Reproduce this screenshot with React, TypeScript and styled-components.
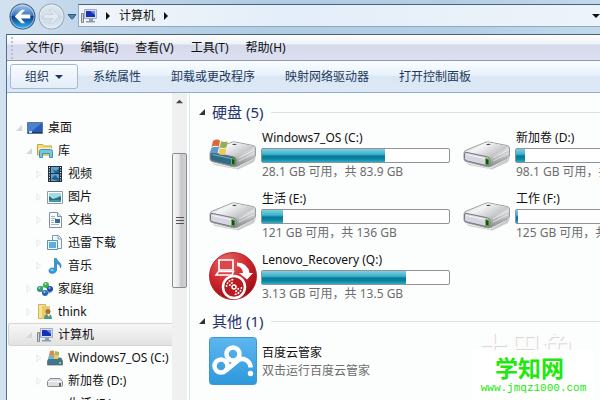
import React from "react";
import styled, { createGlobalStyle, css } from "styled-components";

const GlobalStyle = createGlobalStyle`
  * { box-sizing: border-box; }
  body {
    margin: 0;
    overflow: hidden;
    font-family: "Noto Sans", "Noto Sans CJK SC", sans-serif;
    font-size: 12px;
    line-height: 16px;
    color: #111;
  }
  button { font: inherit; color: inherit; background: none; border: 0; padding: 0; }
  svg { display: block; flex: none; }
`;

const Window = styled.div`
  height: 100vh;
  display: flex;
  flex-direction: column;
  padding-left: 6px;
  overflow: hidden;
  background: linear-gradient(90deg, #d3e2f0 0, #c0d5ea 90px, #b1cde4 260px, #b3cee5 75%, #c2d9ec 100%);
`;

const AddressRow = styled.header`
  flex: none;
  height: 34px;
  display: flex;
  align-items: flex-start;
`;

const NavButtons = styled.div`
  display: flex;
  align-items: center;
  gap: 2px;
  width: 72px;
  padding: 3px 0 0 3px;
`;

const AddressBar = styled.nav`
  flex: 1;
  height: 23px;
  margin-top: 4px;
  padding: 0 0 0 2px;
  display: flex;
  align-items: center;
  gap: 7px;
  border: 1px solid #91a8bd;
  border-top-color: #4b6378;
  border-right: 0;
  background: linear-gradient(90deg, #f0f5fa, #e4eef8 40%, #edf3fa);
`;

const Spacer = styled.span`
  flex: 1;
`;

const Frame = styled.div`
  flex: 1;
  min-height: 0;
  display: flex;
  flex-direction: column;
  border-left: 1px solid #4e7097;
  border-top: 1px solid #47627b;
  background: #fcfdfd;
`;

const MenuBar = styled.nav`
  flex: none;
  height: 26px;
  display: flex;
  align-items: center;
  gap: 17px;
  padding-left: 4px;
  border-bottom: 1px solid #8e97ad;
  background: linear-gradient(#fff 0, #eef1f8 9px, #d5daeb 10px, #dcdff0 100%);
`;

const Grip = styled.span`
  width: 2px;
  height: 22px;
  margin-right: -4px;
  background: repeating-linear-gradient(#b9c1d0 0 2px, transparent 2px 4px);
`;

const Toolbar = styled.div`
  flex: none;
  height: 32px;
  display: flex;
  align-items: center;
  gap: 30px;
  padding-left: 3px;
  white-space: nowrap;
  color: #1e395b;
  border-bottom: 1px solid #93acc9;
  background: linear-gradient(#fafdff, #e9f2fb 45%, #dbe7f5 50%, #dce8f5);
`;

const OrganizeButton = styled.button`
  width: 68px;
  height: 25px;
  margin-right: -15px;
  display: flex;
  align-items: center;
  justify-content: center;
  gap: 6px;
  border: 1px solid #a5b9d3;
  border-radius: 3px;
  background: linear-gradient(#f8fbfe, #e3edf8);
`;

const Content = styled.div`
  flex: 1;
  min-height: 0;
  display: flex;
`;

const Sidebar = styled.aside`
  flex: none;
  width: 183px;
  display: flex;
  border-right: 1px solid #dde5ee;
`;

const Tree = styled.ul`
  flex: 1;
  min-width: 0;
  margin: 0;
  padding: 23px 0 0 1px;
  list-style: none;
  overflow: hidden;
`;

const TreeRow = styled.li<{ $depth: number; $selected?: boolean }>`
  height: 23px;
  display: flex;
  align-items: center;
  gap: 5px;
  padding-left: ${(p) => 7 + p.$depth * 10}px;
  white-space: nowrap;
  border: 1px solid transparent;
  border-right: 0;
  ${(p) =>
    p.$selected &&
    css`
      border-color: #d5d5d5;
      border-radius: 3px 0 0 3px;
      background: linear-gradient(#f7f7f7, #e2e2e2);
    `}
`;

const Scrollbar = styled.div`
  width: 15px;
  margin-right: 2px;
  display: flex;
  flex-direction: column;
  align-items: center;
  background: #f0f0f1;
`;

const ScrollButton = styled.button`
  height: 60px;
  width: 15px;
  padding: 5px 0 0 4px;
  display: flex;
  align-items: flex-start;
`;

const Thumb = styled.div`
  width: 15px;
  height: 135px;
  display: flex;
  align-items: center;
  justify-content: center;
  border: 1px solid #8c8c8e;
  border-radius: 2px;
  background: linear-gradient(90deg, #f8f8f8, #e7e7e9 45%, #c6c7cb 60%, #d0d1d5);
`;

const Main = styled.main`
  flex: 1;
  min-width: 0;
  padding: 9px 0 0 9px;
  overflow: hidden;
`;

const GroupTitle = styled.h2`
  margin: 0;
  height: 20px;
  display: flex;
  align-items: center;
  gap: 6px;
  font-size: 15px;
  line-height: 20px;
  font-weight: 400;
  color: #26356f;
  &::after {
    content: "";
    flex: 1;
    height: 1px;
    margin-left: 2px;
    background: #dcdfe3;
  }
`;

const Tiles = styled.div`
  display: grid;
  grid-template-columns: repeat(2, 254px);
  grid-auto-rows: 61px;
  padding: 6px 0 0 10px;
`;

const Tile = styled.article`
  display: flex;
  align-items: flex-start;
  gap: 4px;
  white-space: nowrap;
`;

const TileIcon = styled.div`
  padding-top: 2px;
`;

const TileText = styled.div<{ $plain?: boolean }>`
  width: 189px;
  padding-top: ${(p) => (p.$plain ? 7 : 1)}px;
`;

const Name = styled.div`
  line-height: 18px;
  padding-left: 1px;
`;

const Detail = styled.div`
  line-height: 18px;
  padding-left: 1px;
  color: #6d6d6d;
`;

const Gauge = styled.div`
  height: 15px;
  margin-top: 1px;
  border: 1px solid #8f9396;
  border-radius: 2px;
  background: #fff;
`;

const GaugeFill = styled.div`
  height: 13px;
  background: linear-gradient(#7fcfe0 0, #3eb3cd 5px, #25a0bc 6px, #087795 7px, #0c83a0 10px, #2bb2cb 100%);
`;

const Watermark = styled.div`
  position: absolute;
  right: 5px;
  bottom: 0;
  width: 123px;
  text-align: center;
`;

const FaintMark = styled.div`
  height: 20px;
  overflow: hidden;
  font-size: 32px;
  line-height: 36px;
  padding-right: 16px;
  color: #fcfcfc;
  text-shadow: 1px 1px 1px #d4d4d4;
`;

const SiteMark = styled.div`
  height: 50px;
  padding-top: 4px;
  background: #fff;
  color: #20e80c;
`;

const SiteName = styled.div`
  font-size: 23px;
  line-height: 28px;
  font-weight: 700;
  padding-right: 8px;
`;

const SiteLink = styled.a`
  display: block;
  color: inherit;
  text-decoration: none;
  font-family: "Liberation Mono", monospace;
  font-size: 11px;
  line-height: 12px;
`;

function Arrow({ dir, color = "#111", size = 8 }: { dir: "up" | "down" | "right"; color?: string; size?: number }) {
  const d = { up: "M0 6 4 2l4 4z", down: "M0 2h8L4 6z", right: "M2 0l4 4-4 4z" }[dir];
  return (
    <svg width={size} height={size} viewBox="0 0 8 8">
      <path d={d} fill={color} />
    </svg>
  );
}

function RecentArrow() {
  return (
    <svg width="10" height="8" viewBox="0 0 10 8">
      <path d="M1 1.500h8L5.500 6h-1z" fill="#4c86b4" stroke="#2d5b85" />
    </svg>
  );
}

function Expander({ open }: { open: boolean }) {
  return (
    <svg width="6" height="8" viewBox="0 0 6 8">
      {open ? <path d="M6 1v6H0z" fill="#d6d6d6" /> : <path d="M1 .5 4.500 4 1 7.500z" fill="none" stroke="#e6e6e6" />}
    </svg>
  );
}

function GroupArrow() {
  return (
    <svg width="7" height="7" viewBox="0 0 7 7">
      <path d="M6 0v6H0z" fill="#333" />
    </svg>
  );
}

function NavOrb({ back }: { back?: boolean }) {
  const id = back ? "orbBack" : "orbForward";
  return (
    <svg width="27" height="27" viewBox="0 0 26 26">
      <defs>
        <linearGradient id={id} x1="0" y1="0" x2="0" y2="1">
          <stop offset="0" stopColor={back ? "#a9cbee" : "#dfe8f0"} />
          <stop offset=".45" stopColor={back ? "#3b78bd" : "#d5e0ea"} />
          <stop offset=".5" stopColor={back ? "#083b8a" : "#cbd8e4"} />
          <stop offset="1" stopColor={back ? "#35b9f2" : "#e0eaf3"} />
        </linearGradient>
      </defs>
      <circle cx="13" cy="13" r="12" fill={`url(#${id})`} stroke={back ? "#315681" : "#94a5b7"} />
      <circle cx="13" cy="13" r="11" fill="none" stroke="#fff" opacity=".45" />
      <path
        d={back ? "M5.500 13 12 6.500h3.500L11.500 11H20.500v4H11.500l4 4.500H12z" : "M20.500 13 14 6.500h-3.500L14.500 11H5.500v4h9l-4 4.500H14z"}
        fill={back ? "#fff" : "#e3ebf2"}
        stroke={back ? "none" : "#c9d5e0"}
      />
    </svg>
  );
}

function ComputerIcon() {
  return (
    <svg width="16" height="16" viewBox="0 0 16 16">
      <path d="M.5 5.500h2v9h-2z" fill="#d1d7d9" stroke="#7c8589" />
      <path d="M3.500 1.500h12v9h-12z" fill="#d6deea" stroke="#a2afc2" />
      <path d="M5 3h9v6H5z" fill="#1730b6" />
      <path d="M9 3h5v4z" fill="#6987e8" />
      <path d="M8 11h4v2h2v1.500H5V13h3z" fill="#8b9db0" />
    </svg>
  );
}

function DesktopIcon() {
  return (
    <svg width="16" height="16" viewBox="0 0 16 16">
      <path d="M.5 2.500h15v11H.5z" fill="#275db7" stroke="#617893" />
      <path d="M1 3h14L4 12H1z" fill="#4a80d0" />
      <path d="M1 12h14v1H1z" fill="#20355c" />
      <path d="M2 11h3v2H2z" fill="#b4dcf5" />
    </svg>
  );
}

function LibraryIcon() {
  return (
    <svg width="16" height="16" viewBox="0 0 16 16">
      <path d="M.5 1.500h5l1 1.500h8v9H.5z" fill="#f3dd80" stroke="#c7a546" />
      <path d="M2 5h13v2H2z" fill="#fff2b4" />
      <path d="M2.500 14.500v-6q0-2 2-2h9q2 0 2 2v6h-3v-4h-7v4z" fill="#75c6e2" stroke="#4096b5" />
    </svg>
  );
}

function VideoIcon() {
  return (
    <svg width="16" height="16" viewBox="0 0 16 16">
      <path d="M1 0h14v16H1z" fill="#25323c" />
      <path d="M4 1h8v6H4zM4 8h8v7H4z" fill="#5ca4d5" />
      <path d="M5 3l4 2 3-3v5H8zM4 13l4-4 4 4v2z" fill="#23618b" />
      <path d="M2.500 1v14M13.500 1v14" stroke="#e7eef2" strokeDasharray="1 1.500" />
    </svg>
  );
}

function PictureIcon() {
  return (
    <svg width="16" height="16" viewBox="0 0 16 16">
      <path d="M.5 2.500h15v12H.5z" fill="#fff" stroke="#8a9da5" />
      <path d="M2 4h12v9H2z" fill="#a3daea" />
      <path d="M2 7l4 3 3-1 5-2v6H2z" fill="#2b7375" />
      <path d="M2 11h12v2H2z" fill="#3f9aac" />
    </svg>
  );
}

function DocumentIcon() {
  return (
    <svg width="16" height="16" viewBox="0 0 16 16">
      <path d="M2.500.5h8l4 4v11h-12z" fill="#fbfdfe" stroke="#83939e" />
      <path d="M10.500.5v4h4" fill="#d7e2e9" stroke="#83939e" />
      <path d="M4 4.500h4M4 6.500h5M4 8.500h3M4 10.500h3M4 12.500h8" stroke="#a5b4bf" />
      <path d="M8 7h5v4H8z" fill="#316ba0" />
    </svg>
  );
}

function DownloadIcon() {
  return (
    <svg width="16" height="16" viewBox="0 0 16 16">
      <path d="M5.500.5h6l3 3v10h-9z" fill="#f1f7fc" stroke="#7b9bb3" />
      <path d="M11 1v3h3" fill="none" stroke="#7b9bb3" />
      <path d="M.5 5.500h10v9H.5z" fill="#eaf7ff" stroke="#5d91b4" />
      <path d="M2 7h7v6H2z" fill="#5eaddd" />
    </svg>
  );
}

function MusicIcon() {
  return (
    <svg width="16" height="16" viewBox="0 0 16 16">
      <path d="M7.500.5h2c.5 3 6 4 4 9.500 0-3-2-4-4-4.500v6.500c0 4-7.500 4.500-7.500 1 0-3 3-3.500 5.500-2.500z" fill="#2c9ddd" stroke="#2575ad" strokeWidth=".7" />
      <ellipse cx="5" cy="12" rx="1.500" ry="1" fill="#8bd5fa" />
    </svg>
  );
}

function HomegroupIcon() {
  return (
    <svg width="16" height="16" viewBox="0 0 16 16">
      <path d="M3 8 8 4l5 7-5 2z" fill="none" stroke="#70b6cf" strokeWidth="2" />
      <circle cx="3" cy="8" r="3" fill="#2f9b72" />
      <circle cx="9" cy="4" r="3" fill="#41b048" />
      <circle cx="8" cy="12" r="3" fill="#2567b5" />
      <circle cx="13" cy="8" r="3" fill="#274cae" />
      <circle cx="2.500" cy="7" r="1" fill="#9be0c4" />
      <circle cx="8.500" cy="3" r="1" fill="#b6ed9f" />
      <circle cx="12.500" cy="7" r="1" fill="#99b8f2" />
      <circle cx="7.500" cy="11" r="1" fill="#9ad1f2" />
    </svg>
  );
}

function UserFolderIcon() {
  return (
    <svg width="16" height="16" viewBox="0 0 16 16">
      <path d="M1.500.5h7v14h-7z" fill="#f8e394" stroke="#d0b35b" />
      <path d="M5 2h8v13H5z" fill="#e9cb68" />
      <circle cx="11" cy="7.500" r="2.500" fill="#a66d47" />
      <path d="M7 15q0-5 4-5t4 5z" fill="#4b9a82" />
      <path d="M10 10h3l-1 3z" fill="#eaf4ef" />
    </svg>
  );
}

function SystemDriveIcon() {
  return (
    <svg width="16" height="16" viewBox="0 0 16 16">
      <path d="M2 8h12l1.500 3v4H.5v-4z" fill="#3e7791" stroke="#56636a" strokeWidth=".7" />
      <path d="M3 1q3-1 4 0v4H2z" fill="#e6854a" />
      <path d="M8 1l4 1v4H7z" fill="#a5b95c" />
      <path d="M2 5h5v4H1z" fill="#7fb0c6" />
      <path d="M7 5h5l-1 4H7z" fill="#edca57" />
      <path d="M12 12h2v2h-2z" fill="#72db49" />
    </svg>
  );
}

function SmallDriveIcon() {
  return (
    <svg width="16" height="16" viewBox="0 0 16 16">
      <path d="M3 5.500h10l2.500 3v4q0 1-1 1h-13q-1 0-1-1v-4z" fill="#dddfe2" stroke="#85898c" />
      <path d="M1 8.500h14" stroke="#fff" />
      <path d="M12 10h2v3h-2z" fill="#5b6562" />
    </svg>
  );
}

function DriveIcon({ system }: { system?: boolean }) {
  const id = system ? "driveS" : "driveP";
  return (
    <svg width="48" height="48" viewBox="0 0 48 48">
      <defs>
        <linearGradient id={`${id}Top`} x1="0" y1="0" x2="1" y2=".6">
          <stop offset="0" stopColor="#c4c5c8" />
          <stop offset=".4" stopColor="#f5f5f6" />
          <stop offset="1" stopColor="#b9babd" />
        </linearGradient>
        <linearGradient id={`${id}Side`} x1="0" y1="0" x2="0" y2="1">
          <stop offset="0" stopColor="#f0f0f1" />
          <stop offset=".5" stopColor="#c9cacc" />
          <stop offset="1" stopColor="#85878a" />
        </linearGradient>
      </defs>
      <path d="M3 33 27 38.500 47 27 45 32 29 39.500 6 35z" fill="#a9aaad" opacity=".6" />
      <path d="M1 23q0-2 2.500-3L22 12.500q2-.8 4-.5l18 3.500q2.500.6 2.500 2.500v7q0 1.500-1.500 2.500L28 36.500q-1.500.8-4 .3L3 31.500q-2-.6-2-2.500z" fill={`url(#${id}Side)`} stroke="#9a9c9f" />
      <path d="M3 21 22 13q2-.7 4-.4l18 3.400q2 .8 0 2L29 25.500q-2 1-4 .5L3 22z" fill={`url(#${id}Top)`} />
      <path d="M1.500 24q0-2 2.500-1.500l20 4.300q3 .7 3 2.700v4.500q0 2.300-3 1.700L4 31q-2.500-.6-2.500-2.500z" fill={system ? "#2f6d86" : "#d6d6e2"} stroke="#77797e" />
      <path d="M3.500 24 23 28.200v1L3.500 25z" fill={system ? "#80acc1" : "#f5f5f8"} />
      <path d="M22.500 28.500 26 29.300v6l-3.500-.8z" fill="#1b4a22" stroke="#64b64b" />
      <path d="M23 14.500q2-1.500 5-.3-2 1.500-5 .3" fill="#3e4348" />
      <path d="M30 28 45 20M30 31l15-7.500" stroke="#fff" opacity=".6" />
      {system && (
        <g>
          <path d="M4 11q4-2.500 7-.5l-1 6q-4-1.500-7.500.5z" fill="#e0653a" />
          <path d="M12 11q3 1.700 6.500.5l-1 6q-3.500 1.200-6.500-.5z" fill="#8fb04a" />
          <path d="M2.300 18q4-2.300 7.400-.5l-1 6q-4-1.500-7.500.5z" fill="#5a9ccc" />
          <path d="M10.800 18q3 1.700 6.500.5l-1 6q-3.500 1.200-6.500-.5z" fill="#efc955" />
        </g>
      )}
    </svg>
  );
}

function RecoveryIcon() {
  return (
    <svg width="48" height="48" viewBox="0 0 48 48">
      <defs>
        <radialGradient id="recovery" cx=".35" cy=".2" r=".85">
          <stop offset="0" stopColor="#e9666a" />
          <stop offset=".5" stopColor="#cf2b30" />
          <stop offset="1" stopColor="#9c0910" />
        </radialGradient>
      </defs>
      <circle cx="24" cy="24" r="23.500" fill="url(#recovery)" stroke="#b82c30" />
      <path d="M10 8h14v10H10z" fill="#d9484c" stroke="#fff" strokeWidth="1.700" />
      <path d="M9.500 19.500h15L23 23H7z" fill="none" stroke="#fff" strokeWidth="1.500" />
      <path d="M28 10.500q11 .5 12.500 10.500H44l-6 6.500-8-6.500h4q-.5-6-6-7z" fill="#fff" />
      <circle cx="25" cy="35" r="11" fill="#b81b20" stroke="#fff" strokeWidth="2.500" />
      <circle cx="25" cy="35" r="2" fill="none" stroke="#fff" strokeWidth="1.500" />
      <path d="M17.500 35a7.500 7.500 0 0 1 7.500-7.500M20.500 34a4.500 4.500 0 0 1 3.500-3.500M32.500 35a7.500 7.500 0 0 1-7.500 7.500M29.500 36a4.500 4.500 0 0 1-3.500 3.500" fill="none" stroke="#fff" strokeWidth="1.500" strokeDasharray="2 1" />
    </svg>
  );
}

function CloudIcon() {
  return (
    <svg width="48" height="48" viewBox="0 0 48 48">
      <defs>
        <linearGradient id="cloud" x1="0" y1="0" x2="0" y2="1">
          <stop offset="0" stopColor="#5db7ed" />
          <stop offset="1" stopColor="#2d98dc" />
        </linearGradient>
      </defs>
      <rect x=".5" y=".5" width="47" height="47" rx="3" fill="url(#cloud)" stroke="#3a99d2" />
      <g fill="none" stroke="#fff" strokeWidth="4.500">
        <circle cx="24" cy="17" r="6.500" />
        <circle cx="12" cy="29" r="6.500" />
        <path d="M17 33.500 29 23.500q4-3 8-.5 4.500 2.500 4.500 7.500" />
      </g>
      <circle cx="41.500" cy="36.500" r="2.700" fill="#fff" />
    </svg>
  );
}

const treeItems = [
  { label: "桌面", depth: 0, open: true, Icon: DesktopIcon },
  { label: "库", depth: 1, open: true, Icon: LibraryIcon },
  { label: "视频", depth: 2, open: false, Icon: VideoIcon },
  { label: "图片", depth: 2, open: false, Icon: PictureIcon },
  { label: "文档", depth: 2, open: false, Icon: DocumentIcon },
  { label: "迅雷下载", depth: 2, open: false, Icon: DownloadIcon },
  { label: "音乐", depth: 2, open: false, Icon: MusicIcon },
  { label: "家庭组", depth: 1, open: false, Icon: HomegroupIcon },
  { label: "think", depth: 1, open: false, Icon: UserFolderIcon },
  { label: "计算机", depth: 1, open: true, selected: true, Icon: ComputerIcon },
  { label: "Windows7_OS (C:)", depth: 2, open: false, Icon: SystemDriveIcon },
  { label: "新加卷 (D:)", depth: 2, open: false, Icon: SmallDriveIcon },
  { label: "生活 (E:)", depth: 2, open: false, Icon: SmallDriveIcon },
];

const drives = [
  { name: "Windows7_OS (C:)", detail: "28.1 GB 可用，共 83.9 GB", used: 66, icon: <DriveIcon system /> },
  { name: "新加卷 (D:)", detail: "98.1 GB 可用，共 103 GB", used: 5, icon: <DriveIcon /> },
  { name: "生活 (E:)", detail: "121 GB 可用，共 136 GB", used: 11, icon: <DriveIcon /> },
  { name: "工作 (F:)", detail: "125 GB 可用，共 126 GB", used: 1, icon: <DriveIcon /> },
  { name: "Lenovo_Recovery (Q:)", detail: "3.13 GB 可用，共 13.5 GB", used: 77, icon: <RecoveryIcon /> },
];

export default function App() {
  return (
    <Window>
      <GlobalStyle />
      <AddressRow>
        <NavButtons>
          <button aria-label="后退"><NavOrb back /></button>
          <button aria-label="前进"><NavOrb /></button>
          <button aria-label="最近"><RecentArrow /></button>
        </NavButtons>
        <AddressBar>
          <ComputerIcon />
          <Arrow dir="right" />
          <span>计算机</span>
          <Arrow dir="right" />
          <Spacer />
          <Arrow dir="down" />
        </AddressBar>
      </AddressRow>
      <Frame>
        <MenuBar>
          <Grip />
          {["文件(F)", "编辑(E)", "查看(V)", "工具(T)", "帮助(H)"].map((m) => (
            <button key={m}>{m}</button>
          ))}
        </MenuBar>
        <Toolbar>
          <OrganizeButton>组织 <Arrow dir="down" color="#1e395b" /></OrganizeButton>
          {["系统属性", "卸载或更改程序", "映射网络驱动器", "打开控制面板"].map((t) => (
            <button key={t}>{t}</button>
          ))}
        </Toolbar>
        <Content>
          <Sidebar>
            <Tree>
              {treeItems.map(({ label, depth, open, selected, Icon }) => (
                <TreeRow key={label} $depth={depth} $selected={selected}>
                  <Expander open={open} />
                  <Icon />
                  <span>{label}</span>
                </TreeRow>
              ))}
            </Tree>
            <Scrollbar>
              <ScrollButton aria-label="向上滚动"><Arrow dir="up" color="#444" size={7} /></ScrollButton>
              <Thumb>
                <svg width="8" height="9" viewBox="0 0 8 9">
                  <path d="M0 1.500h8M0 4.500h8M0 7.500h8" stroke="#555" />
                </svg>
              </Thumb>
            </Scrollbar>
          </Sidebar>
          <Main>
            <GroupTitle><GroupArrow />硬盘 (5)</GroupTitle>
            <Tiles>
              {drives.map((d) => (
                <Tile key={d.name}>
                  <TileIcon>{d.icon}</TileIcon>
                  <TileText>
                    <Name>{d.name}</Name>
                    <Gauge>
                      <GaugeFill style={{ width: `${d.used}%` }} />
                    </Gauge>
                    <Detail>{d.detail}</Detail>
                  </TileText>
                </Tile>
              ))}
            </Tiles>
            <GroupTitle><GroupArrow />其他 (1)</GroupTitle>
            <Tiles>
              <Tile>
                <CloudIcon />
                <TileText $plain>
                  <Name>百度云管家</Name>
                  <Detail>双击运行百度云管家</Detail>
                </TileText>
              </Tile>
            </Tiles>
          </Main>
        </Content>
      </Frame>
      <Watermark>
        <FaintMark>土巴兔</FaintMark>
        <SiteMark>
          <SiteName>学知网</SiteName>
          <SiteLink href="#">www.jmqz1000.com</SiteLink>
        </SiteMark>
      </Watermark>
    </Window>
  );
}
